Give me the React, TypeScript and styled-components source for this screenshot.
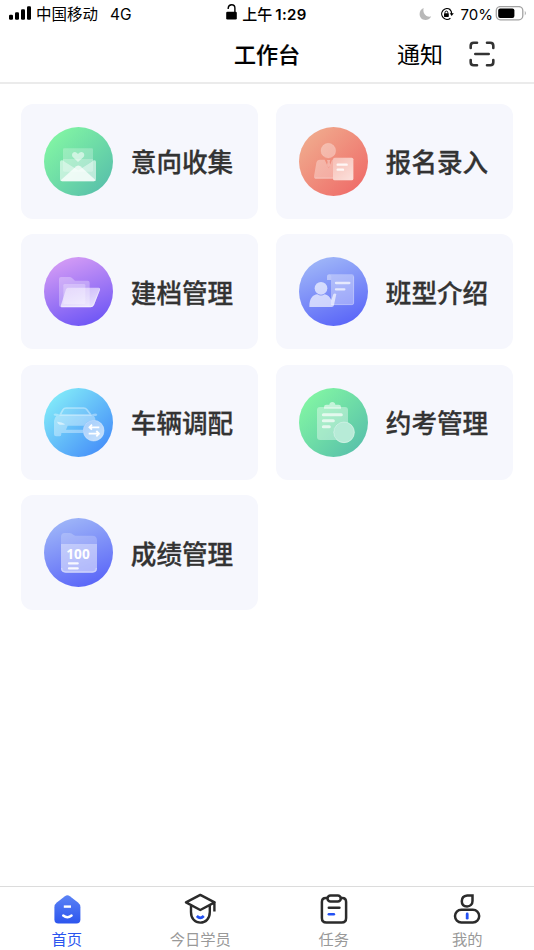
import React, { ReactNode } from 'react';
import styled, { createGlobalStyle } from 'styled-components';

const GlobalStyle = createGlobalStyle`
  * {
    box-sizing: border-box;
  }

  body {
    margin: 0;
    background: #fff;
    font-family: 'Noto Sans CJK SC', sans-serif;
    color: #000;
  }

  svg {
    display: block;
    flex: none;
  }
`;

const Screen = styled.div`
  display: flex;
  flex-direction: column;
  height: 950px;
  width: 534px;
  overflow: hidden;
`;

const StatusBar = styled.div`
  display: grid;
  grid-template-columns: 1fr auto 1fr;
  align-items: center;
  height: 28px;
  padding: 0 7px 0 9px;
  font-family: Inter, 'Noto Sans CJK SC', sans-serif;
  font-size: 15.5px;
  line-height: 27px;
  white-space: nowrap;
`;

const StatusGroup = styled.div<{ $align?: string }>`
  display: flex;
  align-items: center;
  justify-content: ${({ $align }) => $align || 'flex-start'};
`;

const Carrier = styled.span`
  margin-left: 4px;
  padding-top: 1px;
`;

const Network = styled.span`
  margin-left: 12px;
`;

const Time = styled.span`
  display: flex;
  margin-left: 4px;
  font-size: 15px;
  font-weight: 600;
  letter-spacing: 0.4px;
`;

const Clock = styled.div`
  display: flex;
  align-items: center;
  padding-right: 3px;
`;

const Meridiem = styled.span`
  margin-right: 3px;
  font-weight: 500;
  letter-spacing: 0;
`;

const Percent = styled.span`
  margin: 0 2px 0 7px;
  font-size: 15px;
`;

const Header = styled.header`
  display: grid;
  grid-template-columns: 1fr auto 1fr;
  align-items: center;
  height: 56px;
  padding-bottom: 2px;
  border-bottom: 2px solid #ebebeb;
`;

const Title = styled.h1`
  grid-column: 2;
  margin: 0;
  padding-bottom: 3px;
  font-size: 22px;
  font-weight: 500;
  line-height: 32px;
  -webkit-text-stroke: 0.2px #000;
`;

const HeaderActions = styled.div`
  display: flex;
  align-items: center;
  justify-content: flex-end;
  gap: 26px;
  padding-right: 39px;
`;

const Notice = styled.span`
  padding-bottom: 2px;
  font-size: 23px;
  line-height: 32px;
`;

const Content = styled.main`
  flex: 1;
  padding: 19.6px 21px 0;
`;

const Grid = styled.div`
  display: grid;
  grid-template-columns: 1fr 1fr;
  gap: 15.6px 18px;
`;

const Card = styled.div`
  display: flex;
  align-items: center;
  gap: 17.8px;
  height: 115px;
  padding-left: 23px;
  background: #f6f7fd;
  border-radius: 12px;
`;

const CardLabel = styled.span`
  font-size: 25.6px;
  font-weight: 500;
  line-height: 36px;
  color: #333;
  -webkit-text-stroke: 0.3px #333;
`;

const TabBar = styled.nav`
  display: grid;
  grid-template-columns: repeat(4, 1fr);
  height: 64px;
  border-top: 1px solid #dcdcdc;
`;

const Tab = styled.div<{ $active?: boolean }>`
  display: flex;
  flex-direction: column;
  align-items: center;
  padding-top: 6px;
  gap: 1px;
  font-size: 15.3px;
  line-height: 24px;
  color: ${({ $active }) => ($active ? '#2b55ef' : '#999')};
`;

interface DiscProps {
  id: string;
  from: string;
  to: string;
  vertical?: boolean;
  children: ReactNode;
}

const Disc: React.FC<DiscProps> = ({ id, from, to, vertical, children }) => (
  <svg width="69" height="69" viewBox="0 0 207 207">
    <defs>
      <linearGradient
        id={id}
        x1={vertical ? '0.3' : '0.15'}
        y1={vertical ? '0.03' : '0.15'}
        x2={vertical ? '0.65' : '0.85'}
        y2={vertical ? '0.97' : '0.85'}
      >
        <stop offset="0" stopColor={from} />
        <stop offset="1" stopColor={to} />
      </linearGradient>
      <linearGradient id={`${id}-glass`} x1="0" y1="0" x2="0.7" y2="1">
        <stop offset="0" stopColor="#fff" stopOpacity="0.4" />
        <stop offset="1" stopColor="#fff" stopOpacity="0.8" />
      </linearGradient>
    </defs>
    <circle cx="103.5" cy="103.5" r="103.5" fill={`url(#${id})`} />
    {children}
  </svg>
);

const CollectIcon = () => (
  <Disc id="collect" from="#80f3a4" to="#5bc4aa">
    <rect x="57" y="64" width="90" height="70" rx="4" fill="#fff" opacity=".25" />
    <path d="M102 105 L87 91 C79 82 89 70 98 77 L102 81 L106 77 C116 70 126 82 118 91Z" fill="#fff" opacity=".55" />
    <path d="M48 105 Q48 100 53 100 Q58 100 62 104 L103 130 L143 104 Q147 100 152 100 Q156 100 156 105 V157 Q156 163 150 163 H54 Q48 163 48 157Z" fill="#fff" opacity=".58" />
    <path d="M62 104 L57 101 V96 H147 V101 L103 130Z" fill="#fff" opacity=".25" />
    <path d="M50 160 L97 118 Q103 113 109 118 L155 160 Q153 163 149 163 H55 Q51 163 50 160Z" fill="#fff" opacity=".72" />
  </Disc>
);

const EnrollIcon = () => (
  <Disc id="enroll" from="#f0a78b" to="#ef706b">
    <circle cx="88" cy="71" r="22" fill="#fff" fillOpacity=".34" stroke="#fff" strokeOpacity=".2" strokeWidth="2" />
    <path d="M63 98 H77 L86 118 L89 124 L92 118 L99 98 H113 Q120 98 122 105 V155 H50 Q44 155 45 148 L52 107 Q54 98 63 98Z" fill="#fff" opacity=".33" />
    <path d="M84 99 H94 L92 105 L94 114 L89 122 L84 114 L86 105Z" fill="#fff" opacity=".35" />
    <path d="M47 153 H102" stroke="#fff" strokeWidth="3" opacity=".25" />
    <rect x="102" y="92" width="61" height="68" rx="5" fill="#f3a092" />
    <rect x="102" y="92" width="61" height="68" rx="5" fill="url(#enroll-glass)" fillOpacity=".8" />
    <path d="M116 113 H143 M116 128 H132" stroke="#fff" strokeWidth="7" strokeLinecap="round" opacity=".85" />
  </Disc>
);

const ArchiveIcon = () => (
  <Disc id="archive" from="#d29af5" to="#7158f5" vertical>
    <path d="M51 60 H77 Q81 60 84 63 L93 71 H131 Q137 71 137 77 V150 H51 Q45 150 45 144 V66 Q45 60 51 60Z" fill="#fff" opacity=".3" />
    <rect x="58" y="81" width="66" height="60" rx="4" fill="#fff" opacity=".27" />
    <path d="M72 92 H164 Q170 92 168 98 L150 144 Q147 151 140 151 H54 Q48 151 51 144 L66 97 Q68 92 72 92Z" fill="url(#archive-glass)" />
    <path d="M53 149 H141 Q146 149 149 143 L167 97" fill="none" stroke="#fff" strokeWidth="3" opacity=".4" />
  </Disc>
);

const ClassIcon = () => (
  <Disc id="class" from="#9db4f8" to="#5c68f8" vertical>
    <path d="M84 69 V59 Q84 52 92 52 H158 Q165 52 165 59 V138 Q165 144 158 144 H96 V69Z" fill="#fff" opacity=".34" />
    <path d="M84 69 V59 Q84 52 91 52 Q97 52 97 60 V69Z" fill="#fff" opacity=".12" />
    <path d="M97 143 H158 Q164 143 164 137 V58" stroke="#fff" strokeWidth="3" fill="none" opacity=".25" />
    <path d="M111 78 H151 M111 97 H136" stroke="#fff" strokeWidth="7" strokeLinecap="round" opacity=".7" />
    <circle cx="66" cy="94" r="19" fill="#fff" opacity=".65" />
    <path d="M31 149 C31 124 42 113 55 112 Q66 119 77 112 C87 114 93 121 97 129 L103 112 Q106 108 112 111 L105 144 Q104 150 98 150 H33 Q31 150 31 149Z" fill="#fff" opacity=".65" />
  </Disc>
);

const VehicleIcon = () => (
  <Disc id="vehicle" from="#7fe6f9" to="#4994f9">
    <path d="M48 81 L57 65 Q60 60 66 60 H119 Q125 60 129 65 L141 81Z" fill="#fff" fillOpacity=".1" stroke="#fff" strokeOpacity=".4" strokeWidth="5" strokeLinejoin="round" />
    <path fillRule="evenodd" d="M44 84 H37 Q28 84 29 79 Q32 74 43 78 L46 81 H143 L146 78 Q157 74 160 80 Q160 84 150 84 Q155 90 155 99 V138 Q155 143 150 143 H139 Q135 143 135 138 V135 H52 V138 Q52 145 47 145 H36 Q30 145 30 139 V99 Q30 91 37 84Z M71 113 H122 V125 H66Z" fill="#fff" opacity=".36" />
    <path d="M39 101 Q51 100 64 109 Q49 113 42 107Z" fill="#fff" opacity=".55" />
    <circle cx="149" cy="128" r="32" fill="#84bcfa" />
    <circle cx="149" cy="128" r="31" fill="url(#vehicle-glass)" fillOpacity=".65" stroke="#fff" strokeOpacity=".35" strokeWidth="2" />
    <path d="M166 118 H136 L144 110 M136 118 L144 125 M134 137 H165 L157 129 M165 137 L157 145" fill="none" stroke="#fff" strokeWidth="5.5" strokeLinejoin="round" />
  </Disc>
);

const ExamIcon = () => (
  <Disc id="exam" from="#80f3a4" to="#5bc4aa">
    <rect x="54" y="57" width="93" height="99" rx="9" fill="#fff" opacity=".38" />
    <path d="M82 50 H91 Q92 42 100 42 Q108 42 109 50 H119 Q126 50 126 57 V62 H75 V57 Q75 50 82 50Z" fill="#fff" opacity=".58" />
    <path d="M73 80 H127 M73 98 H103 M73 116 H91" stroke="#fff" strokeWidth="9" strokeLinecap="round" opacity=".7" />
    <circle cx="135" cy="133" r="32" fill="#8ddfc0" />
    <circle cx="135" cy="133" r="31" fill="#fff" fillOpacity=".37" stroke="#fff" strokeOpacity=".4" strokeWidth="3" />
  </Disc>
);

const Score = styled.text`
  font-family: 'Noto Sans', sans-serif;
  font-size: 43px;
  font-weight: 700;
  fill: #fff;
`;

const ScoreIcon = () => (
  <Disc id="score" from="#9db4f8" to="#5c68f8" vertical>
    <path d="M62 45 H77 Q83 45 88 50 L94 53 H145 Q159 53 159 67 V151 Q159 164 146 164 H65 Q51 164 51 151 V57 Q51 45 62 45Z" fill="#fff" opacity=".22" />
    <path d="M51 78 H159 V151 Q159 164 146 164 H65 Q51 164 51 151Z" fill="#fff" opacity=".35" />
    <path d="M53 150 Q53 162 65 162 H145 Q157 162 157 150" fill="none" stroke="#fff" strokeWidth="4" opacity=".35" />
    <Score x="67" y="123" textLength="70" lengthAdjust="spacingAndGlyphs">100</Score>
    <path d="M75 136 H101 M75 151 H101" stroke="#fff" strokeWidth="7" strokeLinecap="round" opacity=".9" />
  </Disc>
);

const SignalIcon = () => (
  <svg width="23" height="16" viewBox="0 0 23 16">
    <rect x="0" y="8.8" width="4" height="5" rx="1.2" />
    <rect x="6" y="6.3" width="4" height="7.5" rx="1.2" />
    <rect x="12" y="3.3" width="4" height="10.5" rx="1.2" />
    <rect x="18" y="0.3" width="4" height="13.5" rx="1.2" />
  </svg>
);

const UnlockIcon = () => (
  <svg width="12" height="20" viewBox="0 0 12 20">
    <rect x="0.2" y="7.7" width="10.6" height="7.8" rx="1.3" />
    <path d="M2.2 5 V4 Q2.5 .8 5.7 .8 Q8.9 .8 8.9 4 V8" fill="none" stroke="#000" strokeWidth="1.4" />
  </svg>
);

const MoonIcon = () => (
  <svg width="13" height="15" viewBox="0 0 13 15">
    <path d="M4.6 1 C3.5 6 6.5 10.5 12.2 9.5 C10.5 12.4 8.7 13 6.5 13 C2.8 13 .6 10.2 .6 7 C.6 4.2 2.2 1.8 4.6 1Z" fill="#b8b8b8" />
  </svg>
);

const RotationSvg = styled.svg`
  margin-left: 8px;
`;

const RotationIcon = () => (
  <RotationSvg width="14" height="15" viewBox="0 0 14 15">
    <path d="M10.2 2.5 A5.4 5.4 0 1 0 10.4 11.2" fill="none" stroke="#000" strokeWidth="1.2" />
    <path d="M9.6 2.2 Q11.7 3.8 11.7 7" fill="none" stroke="#000" strokeWidth="1.2" />
    <path d="M9.7 6.3 H13.8 L11.7 9Z" />
    <rect x="4" y="6.2" width="4.8" height="3.7" rx=".6" />
    <path d="M5 6.5 V5.4 Q5 4.1 6.4 4.1 Q7.8 4.1 7.8 5.4 V6.5" fill="none" stroke="#000" />
  </RotationSvg>
);

const BatteryIcon = () => (
  <svg width="32" height="16" viewBox="0 0 32 16">
    <rect x="1.3" y="0.6" width="26.5" height="13.2" rx="4" fill="none" stroke="#a2a2a2" strokeWidth="1.3" />
    <rect x="3.2" y="2.4" width="16.2" height="9.6" rx="2" />
    <path d="M29.8 4.8 Q31.8 7.2 29.8 9.6Z" fill="#a2a2a2" />
  </svg>
);

const ScanIcon = () => (
  <svg width="26" height="26" viewBox="0 0 26 26" fill="none" stroke="#333" strokeWidth="2.6" strokeLinecap="round">
    <path d="M1.7 7 V4.7 Q1.7 1.7 4.7 1.7 H8 M18 1.7 H21.3 Q24.3 1.7 24.3 4.7 V7 M24.3 19 V21.3 Q24.3 24.3 21.3 24.3 H18 M8 24.3 H4.7 Q1.7 24.3 1.7 21.3 V19 M6.3 13 H19.7" />
  </svg>
);

const HomeIcon = () => (
  <svg width="32" height="32" viewBox="0 0 32 32">
    <defs>
      <linearGradient id="home" x1="0" y1="0" x2="0" y2="1">
        <stop offset="0" stopColor="#5b83f5" />
        <stop offset="1" stopColor="#2c55ee" />
      </linearGradient>
    </defs>
    <path d="M13.9 3.2 Q16.4 1.3 18.9 3.2 L27 9.6 Q29.4 11.5 29.4 14.2 V26.5 Q29.4 30.5 25.4 30.5 H7.4 Q3.4 30.5 3.4 26.5 V14.2 Q3.4 11.5 5.8 9.6Z" fill="url(#home)" />
    <path d="M12.8 13.6 H20" stroke="#fff" strokeWidth="2.4" />
    <path d="M12.2 22.5 Q16.4 26 20.6 22.5" stroke="#fff" strokeWidth="2.4" strokeLinecap="round" fill="none" />
  </svg>
);

const StudentIcon = () => (
  <svg width="32" height="32" viewBox="0 0 32 32" fill="none" stroke="#2b2b2b" strokeWidth="2.4" strokeLinejoin="round">
    <path d="M16.3 1.9 L2 9.4 L16.3 17 L30.6 9.4Z M30.4 9.4 V18.5 M7 12.2 V19 C7 25.7 11 29.6 16.3 29.6 C21.6 29.6 25.8 25.7 25.8 19 V12.2" />
    <path d="M12.8 23 Q16.3 26.5 19.8 23" stroke="#2351f3" strokeWidth="2.7" />
  </svg>
);

const TaskIcon = () => (
  <svg width="32" height="32" viewBox="0 0 32 32" fill="none" stroke="#2b2b2b" strokeWidth="2.5" strokeLinecap="round">
    <path d="M9 5 H7.8 Q3.9 5 3.9 9 V25 Q3.9 29.5 8.4 29.5 H23.7 Q28.1 29.5 28.1 25 V9 Q28.1 5 24.3 5 H22.9" />
    <rect x="9.5" y="2.4" width="13.3" height="6" rx="3" />
    <path d="M10.8 14.8 H21.4" />
    <path d="M10.8 21.2 H15.9" stroke="#2351f3" />
  </svg>
);

const ProfileIcon = () => (
  <svg width="32" height="32" viewBox="0 0 32 32" fill="none" stroke="#2b2b2b" strokeWidth="2.5">
    <path d="M21.5 2.5 H16.2 Q10.8 3 10.8 8.2 C10.8 11.5 13 13.4 16.1 13.4 C19.2 13.4 21.5 11.3 21.5 8Z" />
    <rect x="4" y="16.8" width="24.2" height="12.6" rx="6.3" />
    <path d="M16.2 21 V25.2" stroke="#2351f3" strokeWidth="2.8" strokeLinecap="round" />
  </svg>
);

const modules = [
  { label: '意向收集', icon: <CollectIcon /> },
  { label: '报名录入', icon: <EnrollIcon /> },
  { label: '建档管理', icon: <ArchiveIcon /> },
  { label: '班型介绍', icon: <ClassIcon /> },
  { label: '车辆调配', icon: <VehicleIcon /> },
  { label: '约考管理', icon: <ExamIcon /> },
  { label: '成绩管理', icon: <ScoreIcon /> },
];

const tabs = [
  { label: '首页', icon: <HomeIcon />, active: true },
  { label: '今日学员', icon: <StudentIcon /> },
  { label: '任务', icon: <TaskIcon /> },
  { label: '我的', icon: <ProfileIcon /> },
];

const App: React.FC = () => (
  <>
    <GlobalStyle />
    <Screen>
      <StatusBar>
        <StatusGroup>
          <SignalIcon />
          <Carrier>中国移动</Carrier>
          <Network>4G</Network>
        </StatusGroup>
        <Clock>
          <UnlockIcon />
          <Time>
            <Meridiem>上午</Meridiem>1:29
          </Time>
        </Clock>
        <StatusGroup $align="flex-end">
          <MoonIcon />
          <RotationIcon />
          <Percent>70%</Percent>
          <BatteryIcon />
        </StatusGroup>
      </StatusBar>
      <Header>
        <Title>工作台</Title>
        <HeaderActions>
          <Notice>通知</Notice>
          <ScanIcon />
        </HeaderActions>
      </Header>
      <Content>
        <Grid>
          {modules.map(({ label, icon }) => (
            <Card key={label}>
              {icon}
              <CardLabel>{label}</CardLabel>
            </Card>
          ))}
        </Grid>
      </Content>
      <TabBar>
        {tabs.map(({ label, icon, active }) => (
          <Tab key={label} $active={active}>
            {icon}
            {label}
          </Tab>
        ))}
      </TabBar>
    </Screen>
  </>
);

export default App;
